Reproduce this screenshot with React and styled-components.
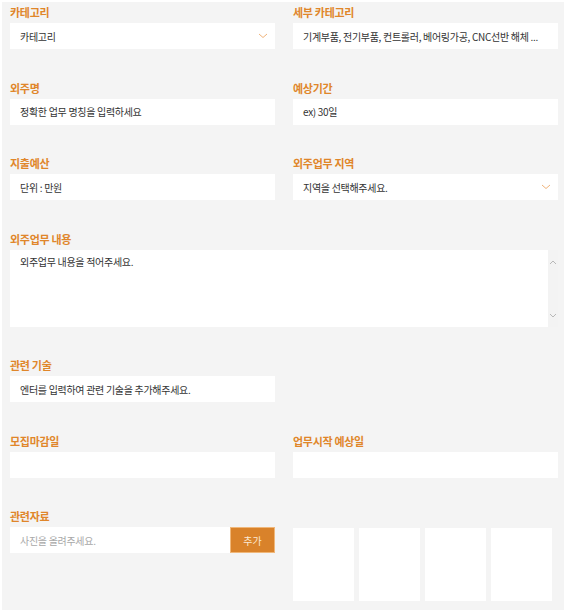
import styled, { createGlobalStyle } from "styled-components";

const GlobalStyle = createGlobalStyle`
  * { box-sizing: border-box; }
  body {
    margin: 0;
    background: #ffffff;
    font-family: "Noto Sans CJK KR", "Noto Sans", sans-serif;
  }
`;

const Wrapper = styled.div`
  margin: 2px 3px 2px 2px;
  background: #f4f4f4;
  padding: 3px 7px 9px 8px;
  display: grid;
  grid-template-columns: 265px 265px;
  column-gap: 18px;
  row-gap: 31.5px;
  width: 562px;
`;

const Field = styled.div`
  display: flex;
  flex-direction: column;
  grid-column: ${(props) => (props.$full ? "1 / 3" : "auto")};
`;

const Label = styled.label`
  height: 14px;
  line-height: 14px;
  margin-bottom: 4px;
  font-size: 11px;
  font-weight: 700;
  color: #e0862a;
  letter-spacing: -0.3px;
`;

const Input = styled.div`
  position: relative;
  height: 26px;
  flex: ${(props) => (props.$grow ? "1" : "none")};
  background: #ffffff;
  display: flex;
  align-items: center;
  padding: 0 ${(props) => (props.$select ? 28 : 6)}px 0 10px;
  font-size: 10px;
  letter-spacing: -0.3px;
  color: ${(props) => (props.$muted ? "#a8a8a8" : "#333333")};
  white-space: nowrap;
  overflow: hidden;
`;

const Chevron = styled.svg`
  position: absolute;
  right: 7px;
  top: 50%;
  margin-top: -3px;
`;

const TextArea = styled.div`
  display: flex;
  height: 77px;
  background: #ffffff;
`;

const TextBody = styled.div`
  flex: 1;
  padding: 4px 10px;
  font-size: 10px;
  letter-spacing: -0.3px;
  color: #333333;
`;

const Scroll = styled.div`
  width: 10px;
  background: #f3f3f3;
  display: flex;
  flex-direction: column;
  justify-content: space-between;
  align-items: center;
  padding: 10px 0 9px;
`;

const UploadRow = styled.div`
  display: flex;
  height: 26px;
`;

const AddButton = styled.button`
  width: 45px;
  border: 1px solid #f0b779;
  background: #d9822a;
  color: #fbe9d4;
  font-family: inherit;
  font-size: 10px;
  padding: 0;
`;

const Thumbs = styled.div`
  display: flex;
  gap: 5px;
  padding-top: 18.5px;
`;

const Thumb = styled.div`
  width: 61px;
  height: 73px;
  background: #ffffff;
`;

function Down() {
  return (
    <Chevron width="10" height="6" viewBox="0 0 10 6">
      <path d="M1 1 L5 4.5 L9 1" fill="none" stroke="#f0b37a" strokeWidth="1" />
    </Chevron>
  );
}

function Arrow({ up }) {
  return (
    <svg width="8" height="5" viewBox="0 0 8 5">
      <path
        d={up ? "M1 4 L4 1 L7 4" : "M1 1 L4 4 L7 1"}
        fill="none"
        stroke="#b8b8b8"
        strokeWidth="1"
      />
    </svg>
  );
}

function App() {
  return (
    <>
      <GlobalStyle />
      <Wrapper>
        <Field>
          <Label>카테고리</Label>
          <Input $select>
            카테고리
            <Down />
          </Input>
        </Field>
        <Field>
          <Label>세부 카테고리</Label>
          <Input>기계부품, 전기부품, 컨트롤러, 베어링가공, CNC선반 해체 ...</Input>
        </Field>

        <Field>
          <Label>외주명</Label>
          <Input>정확한 업무 명칭을 입력하세요</Input>
        </Field>
        <Field>
          <Label>예상기간</Label>
          <Input>ex) 30일</Input>
        </Field>

        <Field>
          <Label>지출예산</Label>
          <Input>단위 : 만원</Input>
        </Field>
        <Field>
          <Label>외주업무 지역</Label>
          <Input $select>
            지역을 선택해주세요.
            <Down />
          </Input>
        </Field>

        <Field $full>
          <Label>외주업무 내용</Label>
          <TextArea>
            <TextBody>외주업무 내용을 적어주세요.</TextBody>
            <Scroll>
              <Arrow up />
              <Arrow />
            </Scroll>
          </TextArea>
        </Field>

        <Field>
          <Label>관련 기술</Label>
          <Input>엔터를 입력하여 관련 기술을 추가해주세요.</Input>
        </Field>
        <Field />

        <Field>
          <Label>모집마감일</Label>
          <Input />
        </Field>
        <Field>
          <Label>업무시작 예상일</Label>
          <Input />
        </Field>

        <Field>
          <Label>관련자료</Label>
          <UploadRow>
            <Input $grow $muted>
              사진을 올려주세요.
            </Input>
            <AddButton>추가</AddButton>
          </UploadRow>
        </Field>
        <Thumbs>
          <Thumb />
          <Thumb />
          <Thumb />
          <Thumb />
        </Thumbs>
      </Wrapper>
    </>
  );
}

export default App;
